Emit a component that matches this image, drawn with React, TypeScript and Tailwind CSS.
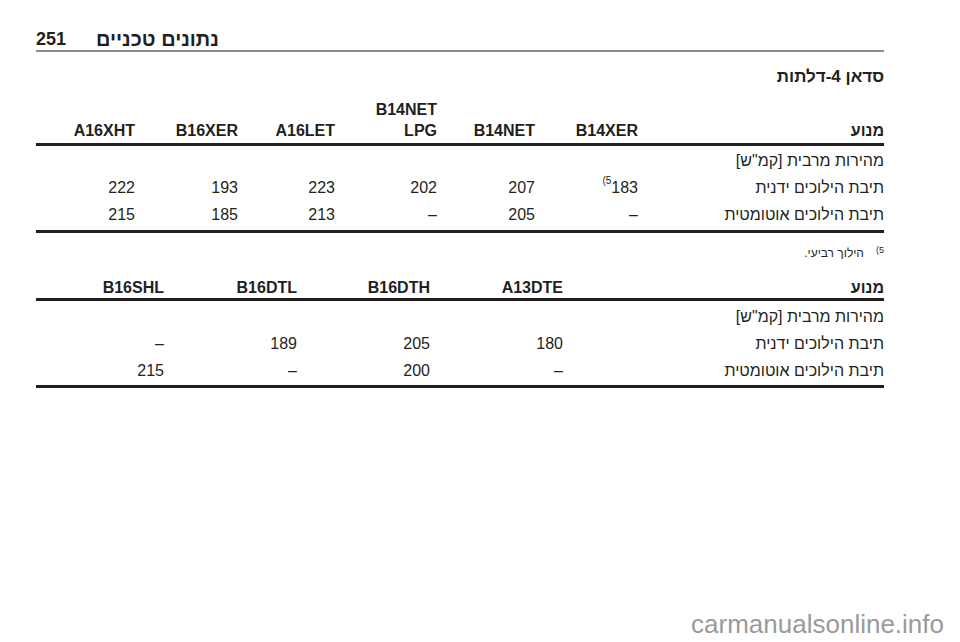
import React from 'react';

const font = { fontFamily: '"Liberation Sans", Arial, "DejaVu Sans", sans-serif' };

const table1Heads = ['B14XER', 'B14NET', 'LPG', 'A16LET', 'B16XER', 'A16XHT'];
const table1Manual = ['183', '207', '202', '223', '193', '222'];
const table1Auto = ['–', '205', '–', '213', '185', '215'];

const table2Heads = ['A13DTE', 'B16DTH', 'B16DTL', 'B16SHL'];
const table2Manual = ['180', '205', '189', '–'];
const table2Auto = ['–', '200', '–', '215'];

const cols1 = 'grid grid-cols-[246px_103px_98px_102px_97px_103px_1fr]';
const cols2 = 'grid grid-cols-[321px_133px_133px_133px_1fr]';

export default function App() {
  return (
    <div className="relative h-[642px] w-[960px] overflow-hidden bg-white text-[#231f20]" style={font}>
      <div className="pl-[36px] pr-[76px] pt-[28px]">
        {/* Page header */}
        <div className="flex items-end gap-[30px] border-b-2 border-[#8c8c8c] font-bold leading-[22px]">
          <span className="text-[18px]">251</span>
          <span dir="rtl" className="text-[20px]">נתונים טכניים</span>
        </div>

        <div dir="rtl">
          <h2 className="mt-[13px] text-[17px] font-bold leading-[24px]">סדאן 4-דלתות</h2>

          {/* Sedan table */}
          <div className={`${cols1} mt-[10px] items-end border-b-[3px] border-[#231f20] pb-[2px] text-[16px] font-bold leading-[21px]`}>
            <div>מנוע</div>
            {table1Heads.map((h) =>
              h === 'LPG' ? (
                <div key={h} dir="ltr" className="text-right">
                  <div className="inline-block text-right">
                    <div>B14NET</div>
                    <div>LPG</div>
                  </div>
                </div>
              ) : (
                <div key={h}>{h}</div>
              )
            )}
          </div>
          <div className="border-b-[3px] border-[#231f20] pb-[2px] pt-[1px] text-[16px] leading-[27px]">
            <div>מהירות מרבית [קמ"ש]</div>
            <div className={cols1}>
              <div>תיבת הילוכים ידנית</div>
              {table1Manual.map((v, i) =>
                i === 0 ? (
                  <div key={i} dir="ltr" className="text-right">
                    <sup className="align-[4px] text-[10px]">(5</sup>
                    {v}
                  </div>
                ) : (
                  <div key={i}>{v}</div>
                )
              )}
            </div>
            <div className={cols1}>
              <div>תיבת הילוכים אוטומטית</div>
              {table1Auto.map((v, i) => (
                <div key={i}>{v}</div>
              ))}
            </div>
          </div>

          {/* Footnote */}
          <div className="mt-[12px] flex items-center gap-[12px] text-[12px] leading-[16px]">
            <span className="text-[9px] leading-[12px] -translate-y-[3px]">5)</span>
            <span>הילוך רביעי.</span>
          </div>

          {/* Diesel table */}
          <div className={`${cols2} mt-[16px] border-b-[3px] border-[#231f20] text-[16px] font-bold leading-[21px]`}>
            <div>מנוע</div>
            {table2Heads.map((h) => (
              <div key={h}>{h}</div>
            ))}
          </div>
          <div className="border-b-[3px] border-[#231f20] pb-[1px] pt-[2px] text-[16px] leading-[27px]">
            <div>מהירות מרבית [קמ"ש]</div>
            <div className={cols2}>
              <div>תיבת הילוכים ידנית</div>
              {table2Manual.map((v, i) => (
                <div key={i}>{v}</div>
              ))}
            </div>
            <div className={cols2}>
              <div>תיבת הילוכים אוטומטית</div>
              {table2Auto.map((v, i) => (
                <div key={i}>{v}</div>
              ))}
            </div>
          </div>
        </div>
      </div>

      <div className="absolute bottom-[2px] right-[16px] text-[26px] leading-[32px] text-[#9a9a9a]">
        carmanualsonline.info
      </div>
    </div>
  );
}
